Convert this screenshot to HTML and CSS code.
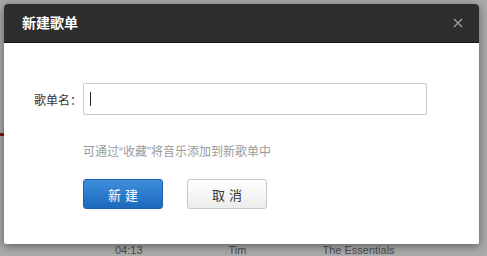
FILE: index.html
```html
<!DOCTYPE html>
<html lang="zh-CN">
<head>
  <meta charset="UTF-8" />
  <title>新建歌单</title>
  <link rel="stylesheet" href="styles.css">
</head>
<body>

  <div class="backdrop">
    <div class="side-mark"></div>
    <div class="row-behind">
      <span class="time">04:13</span>
      <span class="artist">Tim</span>
      <span class="album">The Essentials</span>
    </div>
  </div>

  <div class="dialog">
    <div class="dialog-head">
      <h2>新建歌单</h2>
      <span class="close">
        <svg width="10" height="10" viewBox="0 0 10 10">
          <path d="M1 1 L9 9 M9 1 L1 9" stroke="#9a9a9a" stroke-width="1.4" fill="none"/>
        </svg>
      </span>
    </div>
    <div class="dialog-body">
      <div class="field">
        <label>歌单名：</label>
        <div class="input"><span class="caret"></span></div>
      </div>
      <p class="hint">可通过“收藏”将音乐添加到新歌单中</p>
      <div class="actions">
        <button class="btn btn-primary">新建</button>
        <button class="btn">取消</button>
      </div>
    </div>
  </div>

</body>
</html>
```
FILE: styles.css
```css
* {
  box-sizing: border-box;
  margin: 0;
  padding: 0;
}

body {
  width: 487px;
  height: 256px;
  overflow: hidden;
  background: #a9a9a9;
  font-family: "Liberation Sans", "Noto Sans CJK SC", sans-serif;
  font-size: 12px;
  color: #333;
  position: relative;
}

.backdrop {
  position: absolute;
  inset: 0;
}

.side-mark {
  position: absolute;
  left: 0;
  top: 133px;
  width: 4px;
  height: 3px;
  background: #8c1212;
}

.row-behind {
  position: absolute;
  left: 0;
  top: 245px;
  width: 100%;
  display: flex;
  color: #4a4a4a;
  font-size: 11px;
  line-height: 11px;
}

.time {
  margin-left: 115px;
}

.artist {
  margin-left: 86px;
}

.album {
  margin-left: 76px;
}

.dialog {
  position: absolute;
  left: 4px;
  top: 4px;
  width: 475px;
  height: 240px;
  background: #fff;
  border-radius: 4px 4px 2px 2px;
  box-shadow: 0 2px 8px rgba(0, 0, 0, 0.45);
  overflow: hidden;
}

.dialog-head {
  height: 39px;
  background: #2d2d2d;
  border-bottom: 1px solid #161616;
  display: flex;
  align-items: center;
  justify-content: space-between;
  padding: 0 16px 0 18px;
}

.dialog-head h2 {
  color: #fff;
  font-size: 14px;
  font-weight: bold;
  line-height: 1;
}

.close {
  display: flex;
}

.dialog-body {
  padding: 40px 0 0 30px;
}

.field {
  display: flex;
  align-items: center;
}

.field label {
  width: 49px;
  color: #333;
}

.input {
  width: 344px;
  height: 32px;
  border: 1px solid #cacaca;
  border-radius: 2px;
  display: flex;
  align-items: center;
  padding-left: 6px;
}

.caret {
  width: 1px;
  height: 14px;
  background: #222;
}

.hint {
  margin: 30px 0 0 49px;
  color: #9a9a9a;
  line-height: 14px;
}

.actions {
  display: flex;
  gap: 24px;
  margin: 20px 0 0 49px;
}

.btn {
  width: 80px;
  height: 30px;
  font-family: inherit;
  font-size: 13px;
  letter-spacing: 4px;
  text-indent: 4px;
  color: #333;
  border: 1px solid #c8c8c8;
  border-radius: 3px;
  background: linear-gradient(#ffffff, #ececec);
}

.btn-primary {
  color: #fff;
  border-color: #1a63b4;
  background: linear-gradient(#3e8fdd, #1c69bd);
}
```
